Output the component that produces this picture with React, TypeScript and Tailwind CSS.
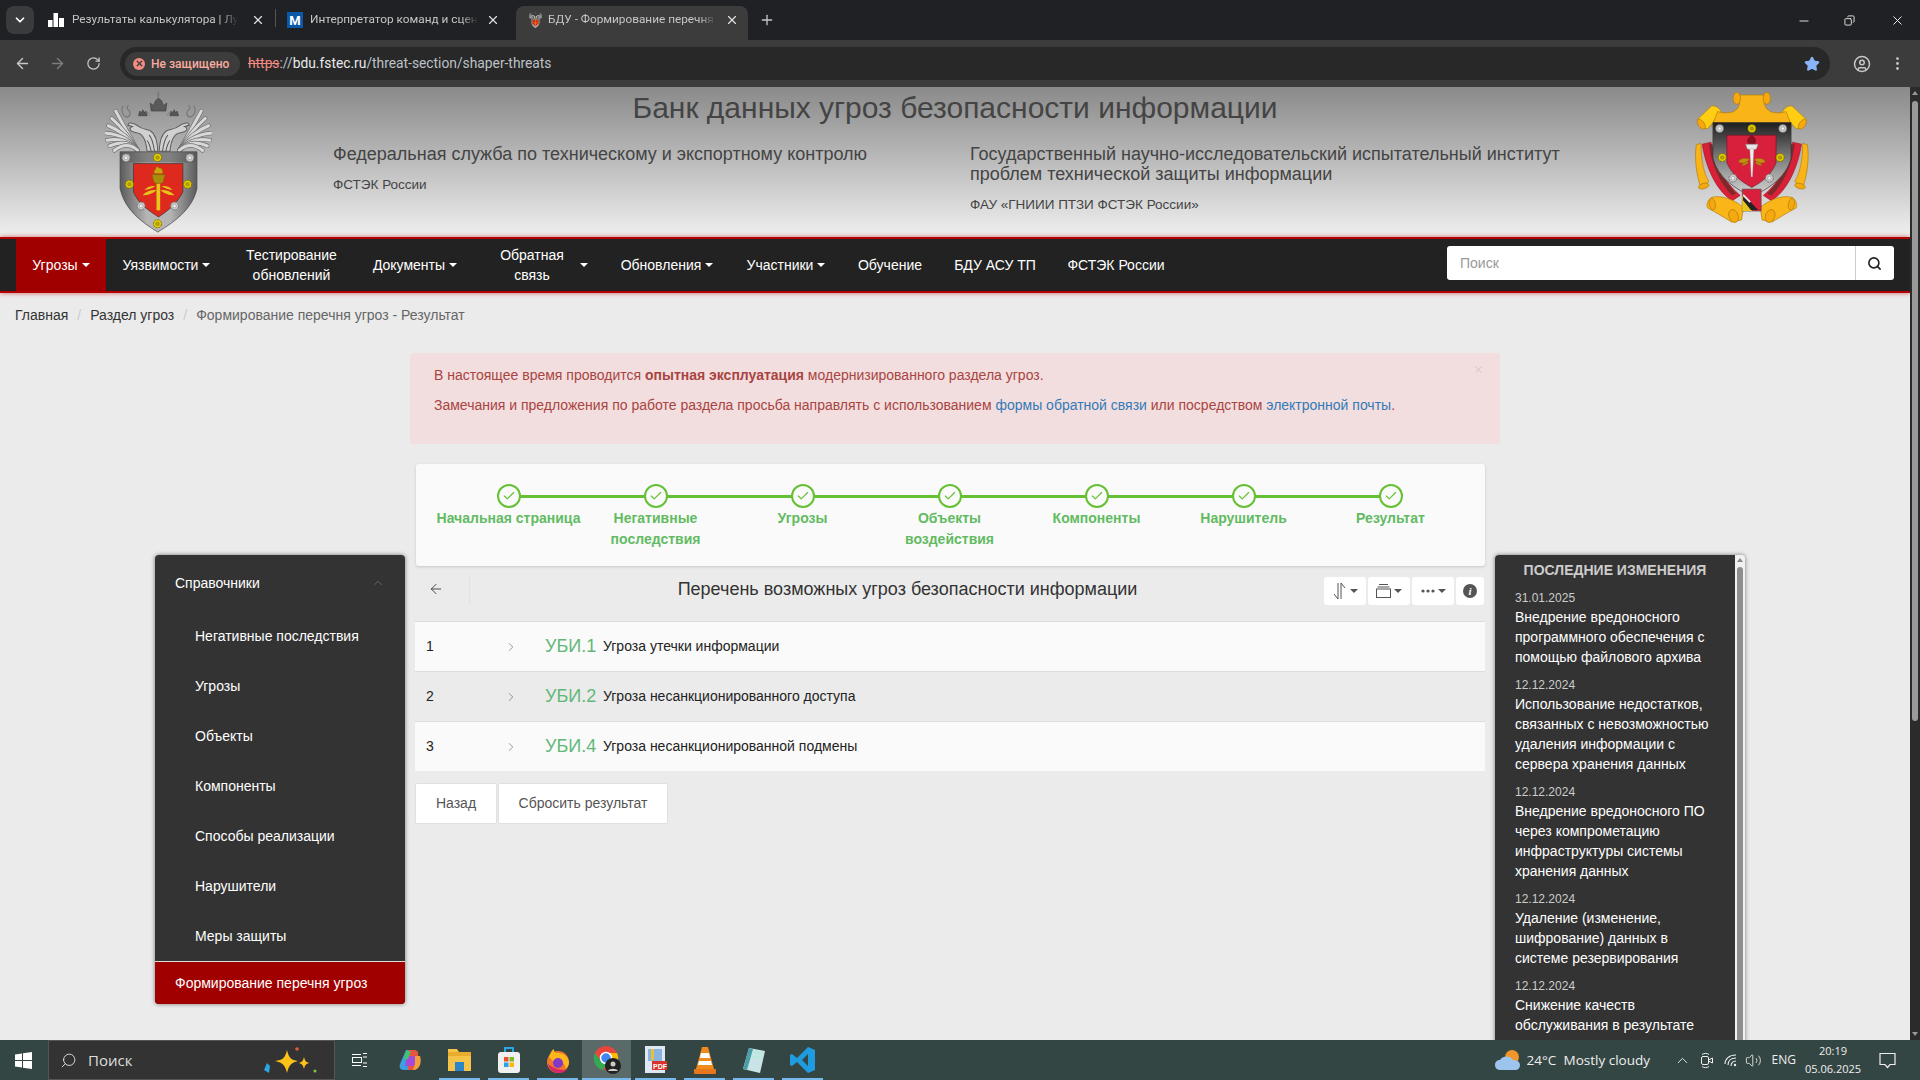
import React from "react";
import { ArrowLeft, ArrowRight, Check, ChevronDown, ChevronRight, ChevronUp, CircleUser, Copy, EllipsisVertical, Minus, Plus, RotateCw, Search, Star, X, Volume2 } from "lucide-react";

const Caret = ({ cls = "border-t-white" }: { cls?: string }) => (
  <span className={`inline-block w-0 h-0 border-x-[4px] border-x-transparent border-t-[4px] ${cls}`} />
);

const Rosette = ({ x, y, gold = false, r = 12 }: { x: number; y: number; gold?: boolean; r?: number }) => (
  <g>
    <circle cx={x} cy={y} r={r} fill={gold ? "#e6d200" : "#c9c9c9"} stroke={gold ? "#6b6200" : "#666"} strokeWidth="2.500" strokeDasharray="7 2" />
    <circle cx={x} cy={y} r={r * 0.45} fill={gold ? "#b8a400" : "#efefef"} stroke={gold ? "#7a7000" : "#888"} strokeWidth="1.500" />
  </g>
);

const featherTips: [number, number][] = [[62, 68], [50, 90], [40, 112], [34, 134], [36, 155], [44, 172], [58, 186]];

const WingSide = () => (
  <g>
    {featherTips.map(([x, y], i) => (
      <g key={i}>
        <path d={`M${x} ${y}Q${90 + i} ${120 + i * 6} ${128} ${186}`} fill="none" stroke="#6f6f6f" strokeWidth="13" strokeLinecap="round" />
        <path d={`M${x} ${y}Q${90 + i} ${120 + i * 6} ${128} ${186}`} fill="none" stroke="#d8d8d8" strokeWidth="9" strokeLinecap="round" />
      </g>
    ))}
    <path d="M188 188c-2-30-6-50-24-62-12-4-24-4-36-14-8-6-16-10-26-8l-4 6 14 4c-6 2-8 8-6 12 6 6 14 6 24 8 12 4 22 14 26 54z" fill="#d0d0d0" stroke="#5f5f5f" strokeWidth="3" />
    <path d="M178 188c-3-20-6-38-16-48M168 188c-3-14-6-24-12-32" fill="none" stroke="#555" strokeWidth="3" />
    <path d="M84 52c-6 10-4 30 12 34 10-2 12-14 6-20-8-4-8-10-2-16" fill="none" stroke="#777" strokeWidth="3.500" />
    <path d="M130 82l4-14 5 5 4-9 5 9 5-5 3 14z" fill="#555" stroke="#333" strokeWidth="1.500" />
    <path d="M154 70c6 2 8 6 10 12" fill="none" stroke="#888" strokeWidth="3" />
  </g>
);

const FstekLogo = ({ size = 107 }: { size?: number }) => (
  <svg width={size} height={(size * 426) / 320} viewBox="30 8 320 426">
    <defs>
      <linearGradient id="rim" x1="0" y1="0" x2="1" y2="0">
        <stop offset="0" stopColor="#5a5a5a" /><stop offset=".35" stopColor="#b5b5b5" /><stop offset=".65" stopColor="#b5b5b5" /><stop offset="1" stopColor="#5a5a5a" />
      </linearGradient>
    </defs>
    <WingSide />
    <g transform="translate(380 0) scale(-1 1)"><WingSide /></g>
    <path d="M168 68l-3-24 10 7 6-14 9-8 9 8 6 14 10-7-3 24z" fill="#5a5a5a" stroke="#333" strokeWidth="1.500" />
    <rect x="187" y="10" width="5" height="16" fill="#777" />
    <path d="M75 190H305V300C290 365 235 400 188 430 140 400 90 365 75 300Z" fill="url(#rim)" stroke="#444" strokeWidth="2" />
    <path d="M75 190H305V222H75Z" fill="#555" opacity=".55" />
    <path d="M115 225H263V310C245 345 220 365 190 385 160 365 130 345 115 310Z" fill="#de2a1e" stroke="#333" strokeWidth="2" />
    <rect x="184" y="275" width="11" height="90" fill="#e6c51a" />
    <path d="M170 258h40l-6 22c-4 6-24 6-28 0z" fill="#ab8c0c" stroke="#6c5a05" strokeWidth="1.500" />
    <path d="M178 255c-4-10 4-10 6-22 6 4 12 8 16 6-2 6 6 8 2 16z" fill="#c9a40e" stroke="#7d6606" />
    <path d="M142 320c14 0 32-5 42-16-16-1-32 4-42 16zM148 304c12-2 22-4 32-11-12-2-24 2-32 11zM238 320c-14 0-32-5-42-16 16-1 32 4 42 16zM232 304c-12-2-22-4-32-11 12-2 24 2 32 11z" fill="#e6c51a" />
    <Rosette x={187} y={207} gold /><Rosette x={93} y={208} /><Rosette x={284} y={208} />
    <Rosette x={103} y={287} gold /><Rosette x={277} y={287} gold />
    <Rosette x={138} y={352} /><Rosette x={238} y={352} /><Rosette x={187} y={405} gold />
  </svg>
);

const ScrollSide = () => (
  <g stroke="#b27c08" strokeWidth="2">
    <path d="M33 96L76 55c12-2 24 6 30 20l-42 48c-14 2-28-12-31-27z" fill="#ffce14" />
    <ellipse cx="45" cy="110" rx="9" ry="17" transform="rotate(-35 45 110)" fill="#f5a80f" />
    <path d="M30 172l14-5c0 50 8 90 24 115l-24 20c-14-40-20-90-14-130z" fill="#f9b418" />
    <ellipse cx="52" cy="296" rx="16" ry="8" transform="rotate(-15 52 296)" fill="#f5a80f" />
    <path d="M48 170l26-6c6 60 40 120 88 160l-24 16C92 312 58 240 48 170z" fill="#d92038" stroke="#a01828" />
    <path d="M78 168c6 50 32 110 72 150l-12 6c-36-34-62-90-70-152z" fill="#7c2a2a" stroke="none" />
    <path d="M76 330c30-8 66 6 96 30l-6 38-30 6c-30-18-52-32-72-42-6-10 2-26 12-32z" fill="#fab519" />
    <ellipse cx="142" cy="386" rx="14" ry="20" transform="rotate(-20 142 386)" fill="#f5a80f" />
    <ellipse cx="78" cy="350" rx="9" ry="18" transform="rotate(-10 78 350)" fill="#f5a80f" />
  </g>
);

const InstituteLogo = () => (
  <svg width="118" height="133" viewBox="20 10 355 400">
    <defs>
      <linearGradient id="inst" x1="0" y1="0" x2="0" y2="1">
        <stop offset="0" stopColor="#1e1e1e" /><stop offset=".45" stopColor="#777" /><stop offset="1" stopColor="#d8d8d8" />
      </linearGradient>
    </defs>
    <ScrollSide />
    <g transform="translate(394 0) scale(-1 1)"><ScrollSide /></g>
    <path d="M160 22H234V46C238 72 265 82 300 72L318 118H76L94 72C130 82 158 72 160 46Z" fill="#f9b418" stroke="#b27c08" strokeWidth="2" />
    <ellipse cx="152" cy="32" rx="11" ry="18" fill="#f5a80f" stroke="#b27c08" strokeWidth="2" />
    <ellipse cx="242" cy="32" rx="11" ry="18" fill="#f5a80f" stroke="#b27c08" strokeWidth="2" />
    <path d="M80 105H315V212C300 270 250 302 197 328 144 302 95 270 80 212Z" fill="url(#inst)" stroke="#333" strokeWidth="2" />
    <path d="M122 143H270V226C255 262 230 282 197 300 164 282 138 262 122 226Z" fill="#d81f3c" stroke="#7a1222" strokeWidth="2" />
    <path d="M186 168c-6-12 4-20 10-24 8 4 16 12 10 24z" fill="#8c1020" stroke="#50080f" />
    <path d="M178 170h38l-5 14c-4 4-24 4-28 0z" fill="#e6e6e6" stroke="#777" strokeWidth="1.500" />
    <path d="M191 184h12l-4 84h-4z" fill="#eee" stroke="#999" />
    <path d="M156 222c10 8 24 6 34-6-12-6-26-4-34 6zM166 234c8 0 16-3 22-10-10-2-18 2-22 10zM238 222c-10 8-24 6-34-6 12-6 26-4 34 6zM228 234c-8 0-16-3-22-10 10-2 18 2 22 10z" fill="#c28f12" stroke="#7a5a08" />
    <Rosette x={100} y={123} /><Rosette x={197} y={123} gold /><Rosette x={290} y={123} />
    <Rosette x={108} y={210} gold /><Rosette x={282} y={210} gold />
    <Rosette x={140} y={272} /><Rosette x={250} y={272} />
    <rect x="168" y="305" width="57" height="66" fill="#d81f3c" stroke="#555" strokeWidth="2" />
    <path d="M168 325l30 46h-30z" fill="#e8c61c" /><path d="M172 322l44 46h-22l-24-30z" fill="#222" /><path d="M172 320l22 22-4 4-20-20z" fill="#eee" />
  </svg>
);

const Tab = ({ icon, title, active = false, w, pr, gap, tw, sep = false }: { icon: React.ReactNode; title: string; active?: boolean; w: string; pr: string; gap: string; tw: string; sep?: boolean }) => (
  <div className={`relative flex items-center h-[34px] pb-[6px] rounded-t-lg pl-[11px] ${w} ${pr} ${active ? "bg-[#3c3c3c]" : ""}`}>
    <span className="w-[16px] h-[16px] flex items-center justify-center shrink-0">{icon}</span>
    <span className={`${gap} ${tw} overflow-hidden whitespace-nowrap text-[11.8px] text-[#c4c7c5] [mask-image:linear-gradient(to_right,black_90%,transparent)]`}>{title}</span>
    <X size={14} className="ml-auto text-[#dfe1e5]" strokeWidth={2} />
    {sep && <span className="absolute right-0 top-[3px] h-[18px] w-px bg-[#555]" />}
  </div>
);

const ChromeBar = () => (
  <div className="font-['Roboto',sans-serif]">
    <div className="h-[40px] bg-[#202124] flex items-end pl-[6px]">
      <div className="w-[28px] h-[28px] mb-[6px] rounded-lg bg-[#3a3b3c] flex items-center justify-center">
        <ChevronDown size={14} className="text-white" strokeWidth={3} />
      </div>
      <div className="flex items-end ml-[3px]">
        <Tab w="w-[239px]" pr="pr-[11px]" gap="ml-[8px]" tw="w-[166px]" sep title="Результаты калькулятора | Лучшие" icon={
          <svg width="16" height="14" viewBox="0 0 16 14" fill="#fff"><rect x="0" y="7" width="4.500" height="7" /><rect x="5.500" y="0" width="4.500" height="14" /><rect x="11" y="5" width="5" height="9" /></svg>
        } />
        <Tab w="w-[240px]" pr="pr-[16px]" gap="ml-[7px]" tw="w-[168px]" title="Интерпретатор команд и сценариев" icon={
          <span className="w-[16px] h-[16px] bg-[#0a58a8] text-white text-[13px] font-bold flex items-center justify-center leading-none">M</span>
        } />
        <Tab w="w-[232px]" pr="pr-[9px]" gap="ml-[5px]" tw="w-[168px]" active title="БДУ - Формирование перечня угроз" icon={<FstekLogo size={13} />} />
      </div>
      <Plus size={16} className="text-[#c4c7c5] ml-[11px] mb-[12px]" />
      <div className="ml-auto flex items-center mb-[12px] text-[#e8e8e8]">
        <Minus size={14} strokeWidth={1.6} className="mr-[33px]" />
        <Copy size={11} strokeWidth={2} className="mr-[35px] -scale-x-100" />
        <X size={15} strokeWidth={1.6} className="mr-[15px]" />
      </div>
    </div>
    <div className="h-[47px] bg-[#3c3c3c] flex items-center">
      <ArrowLeft size={17} className="ml-[14px] text-[#c7c7c7]" />
      <ArrowRight size={17} className="ml-[18px] text-[#7d7d7d]" />
      <RotateCw size={15} className="ml-[20px] text-[#c7c7c7]" />
      <div className="ml-[19px] w-[1710px] h-[33px] rounded-full bg-[#282828] flex items-center pl-[5px]">
        <div className="w-[115px] h-[24px] rounded-full bg-[#3c3c3c] flex items-center pl-[8px]">
          <span className="w-[12px] h-[12px] rounded-full bg-[#f28b82] flex items-center justify-center"><X size={9} strokeWidth={3.5} className="text-[#3c3c3c]" /></span>
          <span className="ml-[6px] text-[12px] font-medium text-[#f9ab9f] whitespace-nowrap">Не защищено</span>
        </div>
        <span className="ml-[8px] text-[13.8px] text-[#bdc1c6] whitespace-nowrap"><span className="text-[#f28b82] line-through">https</span>://<span className="text-[#e8eaed]">bdu.fstec.ru</span>/threat-section/shaper-threats</span>
        <Star size={16} className="ml-auto mr-[10px] text-[#8ab4f8] fill-[#8ab4f8]" />
      </div>
      <CircleUser size={18} className="ml-[23px] text-[#c7c7c7]" />
      <EllipsisVertical size={17} className="ml-[18px] text-[#c7c7c7]" />
    </div>
  </div>
);

const Header = () => (
  <div className="h-[150px] bg-gradient-to-b from-[#8a8a8a] to-[#f0f0f0] flex text-[#444]">
    <div className="w-[333px] pl-[105px] pt-[4px] shrink-0"><FstekLogo /></div>
    <div className="flex-1 min-w-0">
      <h1 className="text-[30px] leading-[36px] mt-[3px] text-center w-[1244px]">Банк данных угроз безопасности информации</h1>
      <div className="flex mt-[18px]">
        <div className="w-[637px]">
          <p className="text-[18px] leading-[20px]">Федеральная служба по техническому и экспортному контролю</p>
          <p className="text-[13.5px] leading-[20px] mt-[11px]">ФСТЭК России</p>
        </div>
        <div className="w-[600px]">
          <p className="text-[18px] leading-[20px]">Государственный научно-исследовательский испытательный институт<br />проблем технической защиты информации</p>
          <p className="text-[13.5px] leading-[20px] mt-[11px]">ФАУ «ГНИИИ ПТЗИ ФСТЭК России»</p>
        </div>
      </div>
    </div>
    <div className="w-[227px] pl-[10px] pt-[4px] shrink-0"><InstituteLogo /></div>
  </div>
);

const NavItem = ({ children, caret = false, active = false, w }: { children: React.ReactNode; caret?: boolean; active?: boolean; w: string }) => (
  <div className={`h-full flex items-center justify-center text-[14px] leading-[20px] text-white text-center shrink-0 ${w} ${active ? "bg-[#a00000]" : ""}`}>
    {children}
    {caret && <span className="ml-[4px] flex items-center"><Caret /></span>}
  </div>
);

const Nav = () => (
  <div className="h-[56px] shrink-0 bg-[#222] border-y-[2px] border-[#b30000] shadow-[0_0_5px_rgba(180,0,0,0.6)] flex items-stretch pl-[16px] pr-[16px] relative">
    <NavItem w="w-[90px]" caret active>Угрозы</NavItem>
    <NavItem w="w-[121px]" caret>Уязвимости</NavItem>
    <NavItem w="w-[129px]">Тестирование<br />обновлений</NavItem>
    <NavItem w="w-[118px]" caret>Документы</NavItem>
    <div className="w-[130px] h-full pl-[14px] flex items-center text-[14px] leading-[20px] text-white text-center shrink-0">
      <span className="w-[88px]">Обратная<br />связь</span><span className="ml-[4px] flex items-center"><Caret /></span>
    </div>
    <NavItem w="w-[126px]" caret>Обновления</NavItem>
    <NavItem w="w-[112px]" caret>Участники</NavItem>
    <NavItem w="w-[96px]">Обучение</NavItem>
    <NavItem w="w-[114px]">БДУ АСУ ТП</NavItem>
    <NavItem w="w-[128px]">ФСТЭК России</NavItem>
    <div className="ml-auto mt-[7px] h-[34px] w-[447px] bg-white rounded-[3px] flex text-[14px] text-[#999]">
      <div className="flex-1 pl-[13px] flex items-center">Поиск</div>
      <div className="w-[39px] pr-[2px] border-l border-[#ccc] flex items-center justify-center"><Search size={15} strokeWidth={2.6} className="text-[#222]" /></div>
    </div>
  </div>
);

const steps = [["Начальная страница"], ["Негативные", "последствия"], ["Угрозы"], ["Объекты", "воздействия"], ["Компоненты"], ["Нарушитель"], ["Результат"]];

const Stepper = () => (
  <div className="ml-[6px] w-[1069px] h-[102px] bg-[#fafafa] rounded-[3px] shadow-[0_1px_3px_rgba(0,0,0,0.15)] pl-[19px] pt-[20px] grid grid-cols-[repeat(7,147px)]">
    {steps.map((s, i) => (
      <div key={i} className="relative flex flex-col items-center text-[14px] leading-[21px] font-bold text-[#62bb62]">
        {i < 6 && <span className="absolute left-[73px] top-[11px] w-[147px] h-[3px] bg-[#66c033]" />}
        <span className="relative w-[24px] h-[24px] rounded-full border-[2px] border-[#66c033] bg-[#fafafa] flex items-center justify-center">
          <Check size={14} strokeWidth={2} className="text-[#66c033]" />
        </span>
        {s.map((l) => <span key={l} className="whitespace-nowrap">{l}</span>)}
      </div>
    ))}
  </div>
);

const ToolBtn = ({ children, w }: { children: React.ReactNode; w: string }) => (
  <div className={`h-[28px] bg-white rounded-[3px] flex items-center justify-center gap-[3px] ${w}`}>{children}</div>
);

const Rows = [
  ["1", "УБИ.1", "Угроза утечки информации", "bg-[#fafafa]"],
  ["2", "УБИ.2", "Угроза несанкционированного доступа", ""],
  ["3", "УБИ.4", "Угроза несанкционированной подмены", "bg-[#fafafa]"],
];

const Center = () => (
  <div className="w-[1090px] shrink-0 ml-[5px] pt-[15px]">
    <div className="h-[91px] bg-[#f2dede] rounded-[3px] px-[24px] pt-[12px] text-[14px] leading-[20px] text-[#a94442] relative">
      <p>В настоящее время проводится <b>опытная эксплуатация</b> модернизированного раздела угроз.</p>
      <p className="mt-[10px]">Замечания и предложения по работе раздела просьба направлять с использованием <span className="text-[#337ab7]">формы обратной связи</span> или посредством <span className="text-[#337ab7]">электронной почты</span>.</p>
      <X size={11} strokeWidth={2.5} className="absolute right-[16px] top-[11px] text-[#e4cbcb]" />
    </div>
    <div className="mt-[20px]"><Stepper /></div>
    <div className="ml-[5px] w-[1070px] h-[56px] flex items-start pt-[10px] relative">
      <div className="w-[55px] h-[28px] flex items-center pl-[13px] pb-[2px] border-r border-[#e2e2e2] shrink-0">
        <ArrowLeft size={16} strokeWidth={1.3} className="text-[#333]" />
      </div>
      <div className="w-[985px] -ml-[55px] text-center text-[18px] leading-[26px] text-[#333]">Перечень возможных угроз безопасности информации</div>
      <div className="absolute right-[1px] top-[11px] flex gap-[2px]">
        <ToolBtn w="w-[42px]">
          <svg width="15" height="18" viewBox="0 0 15 18" fill="none" stroke="#555" strokeWidth="1"><path d="M6 1v16L2 12M9 17V1l4 5" /></svg>
          <Caret cls="border-t-[#555]" />
        </ToolBtn>
        <ToolBtn w="w-[42px]">
          <svg width="15" height="14" viewBox="0 0 15 14" fill="none" stroke="#555" strokeWidth="1"><path d="M3 .5h9M1.500 3h12" /><rect x=".5" y="5" width="14" height="8.500" /></svg>
          <Caret cls="border-t-[#555]" />
        </ToolBtn>
        <ToolBtn w="w-[42px]">
          <svg width="14" height="4" viewBox="0 0 14 4" fill="#555"><circle cx="2" cy="2" r="1.600" /><circle cx="7" cy="2" r="1.600" /><circle cx="12" cy="2" r="1.600" /></svg>
          <Caret cls="border-t-[#555]" />
        </ToolBtn>
        <ToolBtn w="w-[28px]">
          <span className="w-[14px] h-[14px] rounded-full bg-[#555] text-white text-[11px] leading-[14px] font-bold italic text-center font-['Liberation_Serif',serif]">i</span>
        </ToolBtn>
      </div>
    </div>
    <div className="ml-[5px] w-[1070px] mt-[-1px]">
      {Rows.map(([n, code, t, bg]) => (
        <div key={n} className={`h-[50px] border-t border-[#ddd] flex items-center pl-[11px] text-[14px] text-[#222] ${bg}`}>
          <span className="w-[78px]">{n}</span>
          <ChevronRight size={14} strokeWidth={1} className="text-[#555]" />
          <span className="ml-[27px] w-[58px] text-[18px] text-[#62b878]">{code}</span>
          <span>{t}</span>
        </div>
      ))}
    </div>
    <div className="ml-[5px] mt-[12px] flex gap-px text-[14px] text-[#555]">
      <div className="w-[82px] h-[41px] bg-white border border-[#e0e0e0] rounded-[2px] flex items-center justify-center">Назад</div>
      <div className="w-[170px] h-[41px] bg-white border border-[#e0e0e0] rounded-[2px] flex items-center justify-center">Сбросить результат</div>
    </div>
  </div>
);

const menu = ["Негативные последствия", "Угрозы", "Объекты", "Компоненты", "Способы реализации", "Нарушители", "Меры защиты"];

const Sidebar = () => (
  <div className="w-[405px] pl-[155px] pt-[217px] shrink-0">
    <div className="w-[250px] h-[449px] bg-[#333] rounded-[4px] shadow-[0_0_4px_rgba(0,0,0,0.5)] text-white text-[14px] flex flex-col overflow-hidden">
      <div className="h-[56px] shrink-0 flex items-center justify-between pl-[20px] pr-[20px]">
        <span>Справочники</span><ChevronUp size={14} strokeWidth={1} className="text-[#888]" />
      </div>
      <div className="pl-[40px] h-[350px] shrink-0">
        {menu.map((m) => <div key={m} className="h-[50px] flex items-center">{m}</div>)}
      </div>
      <div className="h-[43px] shrink-0 bg-[#a00000] border-t border-[#ddd] pt-[1px] flex items-center pl-[20px]">Формирование перечня угроз</div>
    </div>
  </div>
);

const news = [
  ["31.01.2025", "Внедрение вредоносного программного обеспечения с помощью файлового архива"],
  ["12.12.2024", "Использование недостатков, связанных с невозможностью удаления информации с сервера хранения данных"],
  ["12.12.2024", "Внедрение вредоносного ПО через компрометацию инфраструктуры системы хранения данных"],
  ["12.12.2024", "Удаление (изменение, шифрование) данных в системе резервирования"],
  ["12.12.2024", "Снижение качеств обслуживания в результате"],
];

const RightPanel = () => (
  <div className="pt-[217px] -ml-[5px] shrink-0">
    <div className="w-[250px] h-[560px] flex rounded-t-[4px] shadow-[0_0_4px_rgba(0,0,0,0.5)] overflow-hidden">
      <div className="w-[240px] bg-[#333] pl-[20px] pr-[14px] pt-[5px]">
        <div className="text-[14px] leading-[20px] font-bold text-[#ccc] text-center mb-[9px] -ml-[20px] -mr-[14px]">ПОСЛЕДНИЕ ИЗМЕНЕНИЯ</div>
        {news.map(([d, t], i) => (
          <div key={i} className="mb-[9px]">
            <div className="text-[12px] leading-[18px] text-[#ccc]">{d}</div>
            <div className="text-[14px] leading-[20px] text-white">{t}</div>
          </div>
        ))}
      </div>
      <div className="w-[10px] bg-[#f1f1f1] pl-[2px] relative">
        <span className="absolute left-[2px] top-[3px] w-0 h-0 border-x-[3px] border-x-transparent border-b-[4px] border-b-[#888]" />
        <div className="mt-[12px] h-full w-[6px] rounded-t-full bg-[#8e8e8e]" />
      </div>
    </div>
  </div>
);

const TaskIcon = ({ children, line = false, active = false }: { children: React.ReactNode; line?: boolean; active?: boolean }) => (
  <div className={`relative h-full w-[49px] flex items-center justify-center shrink-0 ${active ? "bg-[#5a6a69]" : ""}`}>
    {children}
    {line && <span className={`absolute bottom-0 h-[2px] bg-[#76b9ed] ${active ? "inset-x-0" : "left-[4px] right-[4px]"}`} />}
  </div>
);

const Taskbar = () => (
  <div className="relative z-10 h-[40px] shrink-0 bg-[#344644] flex items-center font-['Open_Sans',sans-serif] text-[#eee]">
    <div className="w-[48px] flex justify-center pr-[1px]">
      <svg width="17" height="17" viewBox="0 0 17 17" fill="#fff"><path d="M0 2.500l7-1v6.500H0zM8 1.300L17 0v8H8zM0 9h7v6.500l-7-1zM8 9h9v8l-9-1.300z" /></svg>
    </div>
    <div className="w-[287px] h-full bg-[#333] border border-[#555] flex items-center pl-[11px] text-[15px] relative">
      <Search size={17} strokeWidth={1.2} className="-scale-x-100" />
      <span className="ml-[11px] text-[#ddd]">Поиск</span>
      <svg className="absolute left-[213px] top-[4px]" width="60" height="32" viewBox="0 0 60 32">
        <path d="M25 5c2 8 4 10 11 11-7 2-9 4-11 12-2-8-4-10-12-12 8-1 10-3 12-11z" fill="#ffc21a" />
        <path d="M42 12c1 4 2 5 5 6-3 1-4 2-5 6-1-4-2-5-5-6 3-1 4-2 5-6z" fill="#ffc21a" />
        <path d="M5 18l3 3-1 7-5-3z" fill="#2aa5e8" /><circle cx="35" cy="4" r="1.800" fill="#d8602c" /><circle cx="53" cy="26" r="1.500" fill="#86c440" />
      </svg>
    </div>
    <div className="ml-[17px] w-[15px] flex justify-center">
      <svg width="15" height="16" viewBox="0 0 15 16" fill="none" stroke="#fff"><rect x=".5" y="5.500" width="9" height="5" /><path d="M0 2.500h9M0 13.500h9M11 1.500h4M11 5h4M11 11h4M11 14.500h4" /></svg>
    </div>
    <div className="ml-[19px] flex items-center h-full">
      <TaskIcon>
        <svg width="24" height="24" viewBox="0 0 24 24"><path d="M7 2h8l-5 20H5C1 22 0 19 1 16z" fill="#3aa0e0" /><path d="M9 2h6c3 0 5 2 4 6l-3 14H9z" fill="#e8553f" /><path d="M8 8h10l-3 10H6z" fill="#a34bd8" /><path d="M7 3h5l-3 8H5z" fill="#43c46a" /><path d="M16 8h5c2 6 0 14-7 14l2-6z" fill="#f3a03c" /></svg>
      </TaskIcon>
      <TaskIcon line>
        <svg width="23" height="24" viewBox="0 0 23 24"><path d="M0 1h9l2 3h12v19H0z" fill="#f5c24a" /><path d="M0 4h23v4H0z" fill="#e8ad2c" /><rect x="7" y="14" width="9" height="9" fill="#2a86c8" /></svg>
      </TaskIcon>
      <TaskIcon line>
        <svg width="24" height="26" viewBox="0 0 24 26"><path d="M8 6V1h8v5" fill="none" stroke="#29a8e8" strokeWidth="2" /><rect x="1" y="5" width="22" height="21" rx="3" fill="#f0f0f0" /><rect x="7" y="10" width="4.500" height="4.500" fill="#e8552c" /><rect x="12.500" y="10" width="4.500" height="4.500" fill="#7fba2a" /><rect x="7" y="15.500" width="4.500" height="4.500" fill="#2aa0e8" /><rect x="12.500" y="15.500" width="4.500" height="4.500" fill="#fcb80c" /></svg>
      </TaskIcon>
      <TaskIcon line>
        <svg width="24" height="26" viewBox="0 0 24 26"><circle cx="12" cy="15" r="11" fill="#f0762a" /><path d="M3 10c1-4 3-7 5-8 0 3 1 4 4 4 5 0 10 3 11 9 0 2-1 5-3 7-2-8-8-10-13-8z" fill="#ffb81c" /><circle cx="12" cy="16" r="5" fill="#8438c8" /><path d="M2 17c1 6 6 9 10 9s7-1 9-4c-4 2-11 1-19-5z" fill="#d8286c" /></svg>
      </TaskIcon>
      <TaskIcon line active>
        <svg width="28" height="30" viewBox="0 0 28 30"><circle cx="13" cy="13" r="12" fill="#e8453c" /><path d="M2 8a12 12 0 0 0 8 17l5-8H9z" fill="#34a853" /><path d="M13 8h11a12 12 0 0 1-9 17l5-9z" fill="#fbbc05" /><circle cx="13" cy="13" r="5.500" fill="#4285f4" stroke="#fff" strokeWidth="1.500" /><circle cx="20" cy="21" r="8" fill="#222" /><circle cx="20" cy="19" r="2.500" fill="#ccc" /><path d="M15 26c1-3 9-3 10 0z" fill="#ccc" /></svg>
      </TaskIcon>
      <TaskIcon line>
        <svg width="24" height="28" viewBox="0 0 24 28"><rect x="1" y="0" width="20" height="27" fill="#dfe7f2" /><path d="M4 3h14v12H4z" fill="#8ab4e0" /><path d="M7 3h3v11H7z" fill="#e8c03a" /><rect x="8" y="15" width="15" height="9" fill="#d8322a" /><text x="9" y="22.500" fontSize="7" fontWeight="700" fill="#fff" fontFamily="Liberation Sans">PDF</text></svg>
      </TaskIcon>
      <TaskIcon line>
        <svg width="22" height="27" viewBox="0 0 22 27"><path d="M8 0h6l6 22H2z" fill="#f08a1c" /><path d="M7 6h8l1 5H6zM5 14h12l1 4H4z" fill="#fff" /><rect x="0" y="22" width="22" height="5" rx="1" fill="#e8761c" /></svg>
      </TaskIcon>
      <TaskIcon line>
        <svg width="24" height="26" viewBox="0 0 24 26"><path d="M7 1l16 3-5 22-17-4z" fill="#c9e4e6" /><path d="M7 1l4 1-6 21-4-1z" fill="#4a9ea8" /><path d="M12 5l8 2M11 9l8 2" stroke="#8fb" strokeWidth=".6" /></svg>
      </TaskIcon>
      <TaskIcon line>
        <svg width="25" height="26" viewBox="0 0 25 26"><path d="M18 0l7 3v20l-7 3L7 15l-5 4-2-1V8l2-1 5 4zM18 7l-6 6 6 6z" fill="#1f9ce0" /></svg>
      </TaskIcon>
    </div>
    <div className="ml-auto flex items-center h-full text-[13.5px]">
      <svg width="26" height="22" viewBox="0 0 26 22"><circle cx="17" cy="8" r="7" fill="#f0962a" /><path d="M6 21C2 21 0 19 0 16s2-5 5-5c2-4 10-5 13 0 4 0 7 2 7 5s-2 5-5 5z" fill="#9cc4ec" /></svg>
      <span className="ml-[6px] w-[37px]">24°C</span>
      <span className="w-[110px] whitespace-nowrap">Mostly cloudy</span>
      <ChevronUp size={17} strokeWidth={1.3} />
      <svg className="ml-[9px]" width="13" height="17" viewBox="0 0 13 17" fill="none" stroke="#eee" strokeWidth="1"><rect x="1.500" y="4.500" width="7" height="8" rx="1.500" /><path d="M8.500 8l4-2v5l-4-2M2 2.500c2-1.500 5-1.500 7 0M2 14.500c2 1.500 5 1.500 7 0" /></svg>
      <svg className="ml-[11px]" width="14" height="13" viewBox="0 0 14 13" fill="none" stroke="#eee" strokeWidth="1.100"><path d="M1 10C1 5 5 1 12 1M4 11c0-4 3-7 8-7M7 12c0-3 2-5 5-5" /><circle cx="11" cy="11" r="1.200" fill="#eee" stroke="none" /></svg>
      <Volume2 size={17} strokeWidth={1.2} className="ml-[7px]" />
      <span className="ml-[10px] text-[12px]">ENG</span>
      <div className="ml-[9px] w-[56px] text-[11px] leading-[18px] text-center whitespace-nowrap flex flex-col items-center"><span>20:19</span><span>05.06.2025</span></div>
      <svg className="ml-[18px] mr-[24px]" width="17" height="17" viewBox="0 0 17 17" fill="none" stroke="#eee" strokeWidth="1.200"><path d="M1 1.500h15v11h-5l-2.500 3-2.500-3H1z" /></svg>
    </div>
  </div>
);

export default function App() {
  return (
    <div className="h-screen w-screen overflow-hidden flex flex-col bg-[#ebebeb] font-['Liberation_Sans',sans-serif]">
      <ChromeBar />
      <div className="flex-1 min-h-0 flex">
        <div className="flex-1 min-w-0 flex flex-col">
          <Header />
          <Nav />
          <div className="flex-1 min-h-0 overflow-hidden">
            <div className="h-[46px] pl-[15px] pb-[2px] flex items-center gap-[9px] text-[14px] text-[#333]">
              <span>Главная</span><span className="text-[#ccc]">/</span><span>Раздел угроз</span><span className="text-[#ccc]">/</span><span className="text-[#666]">Формирование перечня угроз - Результат</span>
            </div>
            <div className="flex -mt-[1px]">
              <Sidebar />
              <Center />
              <RightPanel />
            </div>
          </div>
        </div>
        <div className="w-[10px] bg-[#2b2b2b] relative">
          <span className="absolute left-[2px] top-[4px] w-0 h-0 border-x-[3px] border-x-transparent border-b-[4px] border-b-[#999]" />
          <div className="mt-[14px] mx-[2px] h-[620px] rounded-full bg-[#9a9a9a]" />
          <span className="absolute left-[2px] bottom-[4px] w-0 h-0 border-x-[3px] border-x-transparent border-t-[4px] border-t-[#999]" />
        </div>
      </div>
      <Taskbar />
    </div>
  );
}
